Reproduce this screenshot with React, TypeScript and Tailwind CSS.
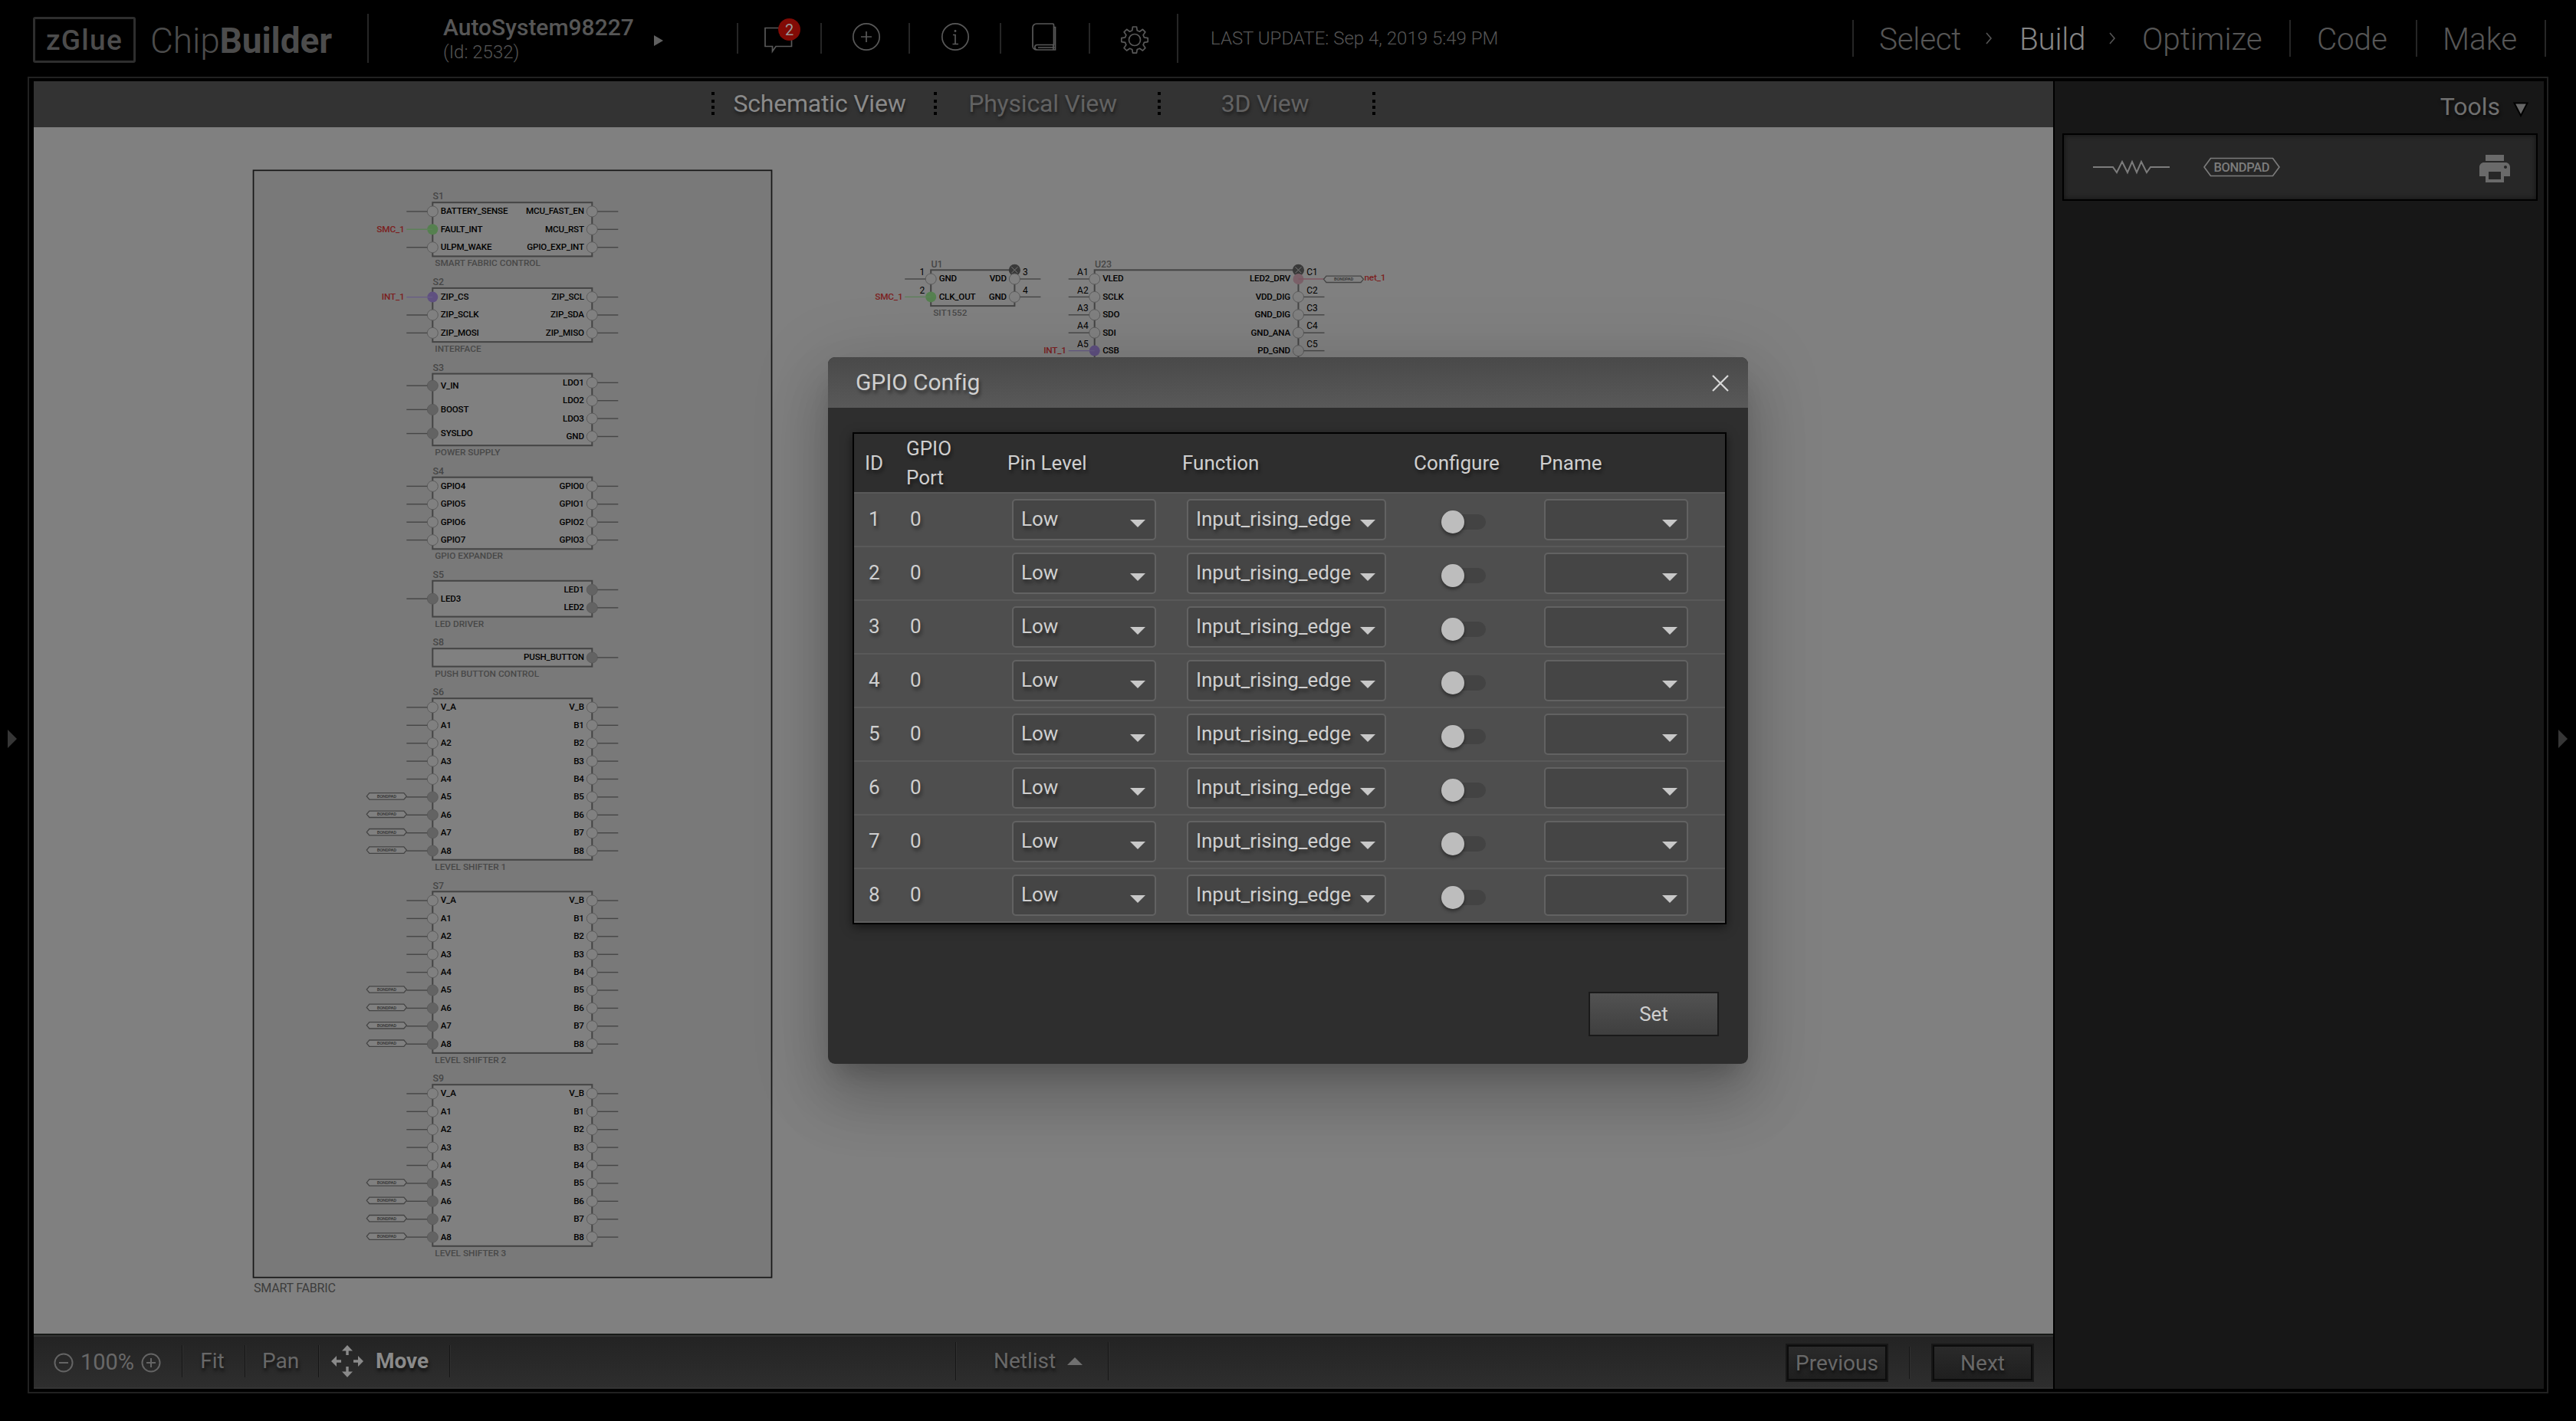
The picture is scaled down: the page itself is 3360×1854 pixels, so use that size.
import React from "react";
import { MdPrint } from "react-icons/md";

const PITCH = 23.4;

/* ---------- Schematic ---------- */

type PinSpec = { name: string; tone?: "open" | "used" | "green" | "purple" | "pink"; net?: string; pad?: boolean };

const toneFill = { open: "#808080", used: "#636363", green: "#55804f", purple: "#5f5080", pink: "#7a6068" };
const toneWire = { open: "#464646", used: "#464646", green: "#5c8058", purple: "#675c86", pink: "#7c5560" };

function Bondpad({ x, y }: { x: number; y: number }) {
  return (
    <g>
      <path
        d={`M${x + 3} ${y - 4.2}H${x + 48}L${x + 51.5} ${y}L${x + 48} ${y + 4.2}H${x + 3}L${x - 0.5} ${y}Z`}
        fill="#808080"
        stroke="#444"
        strokeWidth="1.3"
      />
      <text x={x + 25.5} y={y + 2.1} fontSize="5.8" fontWeight="700" fill="#3c3c3c" textAnchor="middle" letterSpacing="-0.2">
        BONDPAD
      </text>
    </g>
  );
}

function Pin({ x, y, side, pin, no }: { x: number; y: number; side: "l" | "r"; pin: PinSpec; no?: string }) {
  const tone = pin.tone ?? "open";
  const d = side === "l" ? -1 : 1;
  const colored = tone !== "open" && tone !== "used";
  const anchorIn = side === "l" ? "start" : "end";
  const anchorOut = side === "l" ? "end" : "start";
  return (
    <g>
      <circle cx={x} cy={y} r="7" fill={toneFill[tone]} stroke={colored ? "none" : "#5c5c5c"} strokeWidth="1" />
      <line x1={colored ? x : x + d * 7} x2={x + d * 34} y1={y} y2={y} stroke={toneWire[tone]} strokeWidth="1.4" />
      <text
        x={x - d * 10.5}
        y={y + 3.4}
        textAnchor={anchorIn}
        fontSize="11.6"
        fontWeight="500"
        letterSpacing="-0.17"
        fill="#000"
      >
        {pin.name}
      </text>
      {no && (
        <text x={x + d * 8 + (d > 0 ? 2.7 : 0)} y={y - 4.8} textAnchor={anchorOut} fontSize="12" fill="#000">
          {no}
        </text>
      )}
      {pin.pad && <Bondpad x={side === "l" ? x - 85.5 : x + 33.5} y={side === "l" ? y - 1 : y + 0.3} />}
      {pin.net && (
        <text
          x={x + d * (pin.pad ? 86 : 36.8)}
          y={y + (pin.pad ? 2.4 : 3.2)}
          textAnchor={anchorOut}
          fontSize="11.8"
          fontWeight="500"
          letterSpacing="-0.2"
          fill="#7c2020"
        >
          {pin.net}
        </text>
      )}
    </g>
  );
}

type BlockSpec = {
  id: string;
  x: number;
  y: number;
  w: number;
  rows: number;
  label?: string;
  left: PinSpec[];
  right: PinSpec[];
  leftNo?: string[];
  rightNo?: string[];
  closable?: boolean;
};

function Block({ b }: { b: BlockSpec }) {
  const h = b.rows * PITCH;
  return (
    <g>
      <rect x={b.x} y={b.y} width={b.w} height={h} fill="#808080" stroke="#444" strokeWidth="2" />
      <text x={b.x + 0.2} y={b.y - 3.8} fontSize="12.4" fontWeight="500" fill="#464646">
        {b.id}
      </text>
      {b.label && (
        <text x={b.x + 3} y={b.y + h + 12.9} fontSize="11.8" fontWeight="500" fill="#484848">
          {b.label}
        </text>
      )}
      {b.closable && (
        <g>
          <circle cx={b.x + b.w} cy={b.y} r="7.6" fill="#393939" />
          <path d={`M${b.x + b.w - 4} ${b.y - 4}l8 8m0-8l-8 8`} stroke="#777" strokeWidth="1" />
        </g>
      )}
      {b.left.map((p, i) => (
        <Pin key={i} x={b.x} y={b.y + ((i + 0.5) * h) / b.left.length} side="l" pin={p} no={b.leftNo?.[i]} />
      ))}
      {b.right.map((p, i) => (
        <Pin key={i} x={b.x + b.w} y={b.y + ((i + 0.5) * h) / b.right.length} side="r" pin={p} no={b.rightNo?.[i]} />
      ))}
    </g>
  );
}

const open = (...names: string[]): PinSpec[] => names.map((name) => ({ name }));
const used = (...names: string[]): PinSpec[] => names.map((name) => ({ name, tone: "used" as const }));

const shifter = (id: string, y: number, label: string): BlockSpec => ({
  id,
  x: 564.3,
  y,
  w: 208,
  rows: 9,
  label,
  left: [
    ...open("V_A", "A1", "A2", "A3", "A4"),
    ...["A5", "A6", "A7", "A8"].map((name) => ({ name, tone: "used" as const, pad: true })),
  ],
  right: open("V_B", "B1", "B2", "B3", "B4", "B5", "B6", "B7", "B8"),
});

const blocks: BlockSpec[] = [
  {
    id: "S1", x: 564.3, y: 264.2, w: 208, rows: 3, label: "SMART FABRIC CONTROL",
    left: [{ name: "BATTERY_SENSE" }, { name: "FAULT_INT", tone: "green", net: "SMC_1" }, { name: "ULPM_WAKE" }],
    right: open("MCU_FAST_EN", "MCU_RST", "GPIO_EXP_INT"),
  },
  {
    id: "S2", x: 564.3, y: 375.9, w: 208, rows: 3, label: "INTERFACE",
    left: [{ name: "ZIP_CS", tone: "purple", net: "INT_1" }, { name: "ZIP_SCLK" }, { name: "ZIP_MOSI" }],
    right: open("ZIP_SCL", "ZIP_SDA", "ZIP_MISO"),
  },
  { id: "S3", x: 564.3, y: 487.6, w: 208, rows: 4, label: "POWER SUPPLY", left: used("V_IN", "BOOST", "SYSLDO"), right: open("LDO1", "LDO2", "LDO3", "GND") },
  { id: "S4", x: 564.3, y: 622.7, w: 208, rows: 4, label: "GPIO EXPANDER", left: open("GPIO4", "GPIO5", "GPIO6", "GPIO7"), right: open("GPIO0", "GPIO1", "GPIO2", "GPIO3") },
  { id: "S5", x: 564.3, y: 757.8, w: 208, rows: 2, label: "LED DRIVER", left: used("LED3"), right: used("LED1", "LED2") },
  { id: "S8", x: 564.3, y: 846.2, w: 208, rows: 1, label: "PUSH BUTTON CONTROL", left: [], right: used("PUSH_BUTTON") },
  shifter("S6", 911.2, "LEVEL SHIFTER 1"),
  shifter("S7", 1163.3, "LEVEL SHIFTER 2"),
  shifter("S9", 1415.2, "LEVEL SHIFTER 3"),
  {
    id: "U1", x: 1214.2, y: 352.3, w: 109.2, rows: 2, label: "SIT1552", closable: true,
    left: [{ name: "GND" }, { name: "CLK_OUT", tone: "green", net: "SMC_1" }],
    right: open("VDD", "GND"),
    leftNo: ["1", "2"],
    rightNo: ["3", "4"],
  },
  {
    id: "U23", x: 1427.7, y: 352.3, w: 265.8, rows: 6, closable: true,
    left: [...open("VLED", "SCLK", "SDO", "SDI"), { name: "CSB", tone: "purple", net: "INT_1" }, { name: "INT1" }],
    right: [{ name: "LED2_DRV", tone: "pink", net: "net_1", pad: true }, ...open("VDD_DIG", "GND_DIG", "GND_ANA", "PD_GND", "PD1")],
    leftNo: ["A1", "A2", "A3", "A4", "A5", "A6"],
    rightNo: ["C1", "C2", "C3", "C4", "C5", "C6"],
  },
];

function Schematic() {
  return (
    <svg className="block" width="2634" height="1574" viewBox="44 166 2634 1574" fontFamily="Roboto, sans-serif">
      <rect x="330.5" y="222.3" width="676" height="1444.400" fill="#797979" stroke="#161616" strokeWidth="1.7" />
      <text x="331" y="1686.3" fontSize="16" letterSpacing="-0.2" fill="#3c3c3c">
        SMART FABRIC
      </text>
      {blocks.map((b) => (
        <Block key={b.id} b={b} />
      ))}
    </svg>
  );
}

/* ---------- Header ---------- */

const Rule = ({ className }: { className: string }) => <div className={`w-[2px] shrink-0 bg-[#262626] ${className}`} />;

function Header() {
  return (
    <header className="flex h-[100px] shrink-0 items-center text-[#565656]">
      <div className="ml-[43px] mt-1 flex h-[60px] w-[134px] shrink-0 items-center justify-center rounded-[3px] border-[3px] border-[#2e2e2e]">
        <span className="text-[37px] font-medium leading-none tracking-[1.3px] text-[#4c4c4c]">zGlue</span>
      </div>
      <div className="ml-[19px] mt-1.5 w-[240px] shrink-0 whitespace-nowrap text-[46px] leading-none tracking-[-0.1px] text-[#4c4c4c]">
        <span className="font-light">Chip</span>
        <span className="font-bold">Builder</span>
      </div>
      <Rule className="ml-[43px] h-16" />
      <div className="ml-[97px] w-[260px] shrink-0 pt-[3px] leading-8">
        <div className="whitespace-nowrap text-[30px] font-medium">AutoSystem98227</div>
        <div className="whitespace-nowrap text-[24px] font-light">(Id: 2532)</div>
      </div>
      <svg className="ml-[15px] mt-1.5 shrink-0" width="13" height="16" viewBox="0 0 13 16">
        <path d="M0 1L12 8L0 15Z" fill="#606060" />
      </svg>
      <Rule className="ml-[95px] h-10" />
      <div className="relative ml-[29px] h-11 w-11 shrink-0">
        <svg width="44" height="44" viewBox="0 0 44 44" fill="none" stroke="#585858" strokeWidth="1.7">
          <path d="M6 8.5H40.500V32.5H20L15.500 39V32.5H6Z" />
        </svg>
        <span className="absolute left-[23px] top-[-4px] flex h-[29px] w-[29px] items-center justify-center rounded-full bg-[#820a05] text-[20px] text-[#999]">
          2
        </span>
      </div>
      <Rule className="ml-[34px] h-10" />
      <svg className="ml-[36px] shrink-0" width="44" height="44" viewBox="0 0 44 44" fill="none" stroke="#585858" strokeWidth="1.7">
        <circle cx="22" cy="20" r="17.200" />
        <path d="M22 13v14M15 20h14" />
      </svg>
      <Rule className="ml-[33px] h-10" />
      <svg className="ml-[37px] shrink-0" width="44" height="44" viewBox="0 0 44 44" fill="none" stroke="#585858" strokeWidth="1.7">
        <circle cx="22" cy="20" r="17.200" />
        <circle cx="22" cy="12.500" r="1.400" fill="#585858" stroke="none" />
        <path d="M19 17.500h3v12M18.500 29.500h7.500" />
      </svg>
      <Rule className="ml-[36px] h-10" />
      <svg className="ml-[33px] shrink-0" width="44" height="44" viewBox="0 0 44 44" fill="none" stroke="#585858" strokeWidth="1.7">
        <path d="M36 7.500h1.500V37H13a5 5 0 0 1-5-4.500V8a5 5 0 0 1 5-5h21q1.500 0 1.500 1.500V30.500H14a3 3 0 0 0 0 6.500M15 34h21.500M35 30.500V37" />
      </svg>
      <Rule className="ml-[37px] h-10" />
      <svg className="ml-[36px] shrink-0" width="44" height="44" viewBox="0 0 44 44" fill="none" stroke="#585858" strokeWidth="1.7" strokeLinejoin="round">
        <circle cx="22" cy="24" r="7.500" />
        <path d="M19.500 7h5l.8 4.800 3.200 1.400 4-2.900 3.400 3.500-2.800 3.900 1.300 3.100 4.800.8v5l-4.800.8-1.300 3.200 2.800 4-3.400 3.400-4-2.800-3.200 1.300-.8 4.700h-5l-.8-4.700-3.100-1.300-4 2.800-3.500-3.400 2.800-4-1.300-3.200-4.800-.8v-5l4.800-.8 1.300-3.100-2.800-3.900 3.500-3.500 4 2.900 3.100-1.400z" />
      </svg>
      <Rule className="ml-[33px] h-16" />
      <div className="ml-[42px] w-[400px] shrink-0 whitespace-nowrap text-[24px] font-light">
        LAST UPDATE: Sep 4, 2019 5:49 PM
      </div>
      <nav className="ml-auto mr-[39px] flex shrink-0 items-center whitespace-nowrap text-[40.500px] font-light">
        <Rule className="h-12" />
        <span className="ml-[33px] w-[139px] pt-0.5 tracking-[-0.3px]">Select</span>
        <Chevron />
        <span className="ml-[35px] w-[117px] pt-0.5 text-[#858585] tracking-[-0.3px]">Build</span>
        <Chevron />
        <span className="ml-[34px] w-[192px] pt-0.5 tracking-[-0.1px]">Optimize</span>
        <Rule className="h-12" />
        <span className="ml-[34px] w-[129px] pt-0.5 tracking-[-0.2px]">Code</span>
        <Rule className="h-12" />
        <span className="ml-[33px] w-[133px] pt-0.5">Make</span>
        <Rule className="h-12" />
      </nav>
    </header>
  );
}

const Chevron = () => (
  <svg width="9" height="16" viewBox="0 0 9 16" fill="none" stroke="#555" strokeWidth="1.6">
    <path d="M1 1l6 7l-6 7" />
  </svg>
);

/* ---------- Workspace ---------- */

const Dots = () => (
  <div className="flex w-1 shrink-0 flex-col">
    <i className="mb-1.5 h-1 bg-black" />
    <i className="mb-1 h-1 bg-black" />
    <i className="mb-1 h-1 bg-black" />
    <i className="h-1 bg-black" />
  </div>
);

function ViewTabs() {
  return (
    <div className="flex h-[60px] shrink-0 items-center whitespace-nowrap bg-[#333] pb-[2px] text-[32px] tracking-[-0.2px] text-[#626262] [text-shadow:1px_3px_4px_rgba(0,0,0,0.5)]">
      <div className="w-[884px]" />
      <Dots />
      <span className="w-[286px] pr-3 text-center text-[#8a8a8a]">Schematic View</span>
      <Dots />
      <span className="w-[288px] pr-3 text-center">Physical View</span>
      <Dots />
      <span className="w-[276px] pr-1 text-center">3D View</span>
      <Dots />
    </div>
  );
}

const FootRule = ({ className }: { className: string }) => (
  <div className={`w-[2px] shrink-0 border-l border-[#161616] bg-[#303030] ${className}`} />
);

function ZoomIcon({ plus }: { plus?: boolean }) {
  return (
    <svg className="shrink-0" width="26" height="26" viewBox="0 0 26 26" fill="none" stroke="#646464" strokeWidth="2">
      <circle cx="13" cy="13" r="11.500" />
      <path d={plus ? "M7 13h12M13 7v12" : "M7 13h12"} />
    </svg>
  );
}

function Footer() {
  const button =
    "flex h-[50px] w-[134px] shrink-0 items-center justify-center border-2 border-[#171717] bg-[#0c0c0c] p-0.5";
  const face = "flex h-full w-full items-center justify-center bg-linear-to-b from-[#2a2a2a] to-[#1f1f1f] pt-[2px]";
  return (
    <div className="flex h-[72px] shrink-0 items-center whitespace-nowrap border-y-2 border-t-[#171a17] border-b-[#343434] bg-linear-to-b from-[#232323] to-[#2e2e2e] text-[28px] text-[#686868] shadow-[inset_0_2px_0_#333] [text-shadow:1px_4px_4px_rgba(0,0,0,0.6)]">
      <div className="ml-[26px] flex w-[167px] shrink-0 items-center pt-1">
        <ZoomIcon />
        <span className="w-[88px] text-center text-[29px] [text-shadow:none]">100%</span>
        <ZoomIcon plus />
      </div>
      <FootRule className="h-[42px]" />
      <span className="w-[80px] pr-1 text-center">Fit</span>
      <FootRule className="h-[42px]" />
      <span className="w-[94px] pr-1 text-center">Pan</span>
      <FootRule className="h-[42px]" />
      <svg className="ml-[15px] shrink-0" width="42" height="42" viewBox="0 0 42 42" fill="#8a8a8a">
        <path d="M21 0l7 7.500h-5.300V13h-3.400V7.500H14zM21 42l-7-7.500h5.300V28h3.400v6.500H28zM0 21l7-7v5.300h6v3.400H7V28zM42 21l-7 7v-5.300h-6v-3.400h6V14z" />
      </svg>
      <span className="ml-4 w-[96px] font-bold text-[#8a8a8a]">Move</span>
      <FootRule className="h-[42px]" />
      <div className="w-[658px] shrink-0" />
      <FootRule className="h-[50px]" />
      <div className="flex w-[197px] shrink-0 items-center pl-[48px]">
        <span className="w-[96px]">Netlist</span>
        <svg width="20" height="10" viewBox="0 0 20 10">
          <path d="M0 10L10 0L20 10Z" fill="#707070" />
        </svg>
      </div>
      <FootRule className="h-[50px]" />
      <div className="ml-auto mr-[25px] flex items-center pt-1">
        <div className={button}>
          <div className={face}>Previous</div>
        </div>
        <FootRule className="mx-[27px] h-[42px]" />
        <div className={button}>
          <div className={face}>Next</div>
        </div>
      </div>
    </div>
  );
}

function ToolsPanel() {
  return (
    <aside className="ml-[2px] flex grow flex-col bg-[#171717]">
      <div className="flex h-[68px] items-center justify-end pr-[20px] pb-[2px] text-[32px] text-[#707070] [text-shadow:1px_3px_4px_rgba(0,0,0,0.6)]">
        <span className="mr-[17px]">Tools</span>
        <svg className="mt-2" width="20" height="20" viewBox="0 0 20 20">
          <path d="M1.500 1.500H18.500L10 18Z" fill="#666" stroke="#000" strokeWidth="2" />
        </svg>
      </div>
      <div className="ml-2.5 flex h-[88px] w-[620px] items-center border-2 border-black bg-[#272727] shadow-[inset_0_0_6px_#111]">
        <svg className="ml-[38px]" width="100" height="20" viewBox="0 0 100 20" fill="none" stroke="#7c7c7c" strokeWidth="2">
          <path d="M0 10H26L31 17L38 3L45 17L51 3L57 17L63 3L70 17L75 10H100" />
        </svg>
        <svg className="ml-[44px]" width="100" height="26" viewBox="0 0 100 26">
          <path d="M9.500 1.500H90.500L99 13L90.500 24.500H9.500L1 13Z" fill="none" stroke="#7c7c7c" strokeWidth="1.700" />
          <text x="50" y="19" fontFamily="Roboto, sans-serif" fontSize="16.500" fontWeight="500" fill="#7c7c7c" textAnchor="middle" textLength="73">
            BONDPAD
          </text>
        </svg>
        <MdPrint className="ml-auto mr-[30px] mt-1" size={48} color="#6a6a6a" />
      </div>
    </aside>
  );
}

/* ---------- Dialog ---------- */

const columns = "grid grid-cols-[54px_132px_228px_301px_165px_1fr]";

function Select({ value, className }: { value: string; className: string }) {
  return (
    <div className={`flex h-[54px] items-center justify-between rounded-[5px] border-2 border-[#626262] bg-[#454545] pl-[10px] ${className}`}>
      <span className="pb-[2px] tracking-[-0.05px]">{value}</span>
      <svg className="mt-2.5 shrink-0" width="20" height="10" viewBox="0 0 20 10">
        <path d="M0 0H20L10 10Z" fill="#c8c8c8" />
      </svg>
    </div>
  );
}

function GpioDialog() {
  return (
    <section className="flex h-[922px] w-[1200px] flex-col overflow-hidden rounded-[9px] bg-[#2e2e2e] text-[26px] text-[#cfcfcf] shadow-[0_22px_30px_-14px_rgba(0,0,0,0.2),0_48px_76px_6px_rgba(0,0,0,0.14),0_18px_92px_16px_rgba(0,0,0,0.12)] [text-shadow:2px_4px_4px_rgba(0,0,0,0.45)]">
      <div className="flex h-[66px] shrink-0 items-center justify-between bg-linear-to-b from-[#494949] to-[#595959] pb-1 pl-9 pr-6">
        <h2 className="pt-[3px] text-[30px] tracking-[-0.1px]">GPIO Config</h2>
        <svg className="mt-1.5" width="24" height="24" viewBox="0 0 24 24" stroke="#d8d8d8" strokeWidth="2.200">
          <path d="M2 2L22 22M22 2L2 22" />
        </svg>
      </div>
      <div className="ml-8 mt-8 w-[1140px] border-2 border-black bg-[#4e4e4e] shadow-[0_4px_12px_rgba(0,0,0,0.5)]">
        <div className={`${columns} h-[76px] items-center bg-[#2e2e2e] pb-[2px] leading-[38px]`}>
          <span className="pl-[14px]">ID</span>
          <span className="pl-[14px]">
            GPIO
            <br />
            Port
          </span>
          <span className="pl-[14px]">Pin Level</span>
          <span className="pl-[14px]">Function</span>
          <span className="pl-[15px]">Configure</span>
          <span className="pl-[14px]">Pname</span>
        </div>
        {[1, 2, 3, 4, 5, 6, 7, 8].map((id) => (
          <div key={id} className={`${columns} h-[70px] items-center border-t-2 border-[#595959]`}>
            <span className="pb-[2px] pl-[19px]">{id}</span>
            <span className="pb-[2px] pl-[19px]">0</span>
            <Select value="Low" className="ml-5 w-[188px] pr-3" />
            <Select value="Input_rising_edge" className="ml-5 w-[260px] pr-3" />
            <div className="flex items-center pl-[51px] pt-[6px]">
              <div className="flex h-5 w-[58px] items-center rounded-full bg-[#434343]">
                <div className="h-[30px] w-[30px] shrink-0 rounded-full bg-[#bdbdbd] shadow-[0_3px_4px_rgba(0,0,0,0.4)]" />
              </div>
            </div>
            <Select value="" className="ml-5 w-[188px] pr-3" />
          </div>
        ))}
        <div className="h-[2px] bg-[#5e5e5e]" />
      </div>
      <button className="ml-auto mr-[38px] mt-[88px] h-[58px] w-[170px] border-2 border-[#1a1a1a] bg-linear-to-b from-[#525252] to-[#3f3f3f]">
        Set
      </button>
    </section>
  );
}

const EdgeArrow = ({ className }: { className: string }) => (
  <div className={`flex shrink-0 items-center pt-[9px] ${className}`}>
    <svg width="12" height="24" viewBox="0 0 12 24">
      <path d="M0 0L12 12L0 24Z" fill="#363636" />
    </svg>
  </div>
);

export default function App() {
  return (
    <div className="relative flex h-[1854px] w-[3360px] flex-col overflow-hidden bg-black font-['Roboto',sans-serif]">
      <Header />
      <div className="flex h-[1718px]">
        <EdgeArrow className="w-9 pl-[10px]" />
        <main className="flex h-[1718px] w-[3288px] border-2 border-[#212121] py-1 pl-1.5 pr-1">
          <div className="flex h-[1706px] w-[2634px] shrink-0 flex-col">
            <ViewTabs />
            <div className="h-[1574px] shrink-0 overflow-hidden bg-[#808080]">
              <Schematic />
            </div>
            <Footer />
          </div>
          <ToolsPanel />
        </main>
        <EdgeArrow className="w-9 pl-[13px]" />
      </div>
      <div className="absolute left-[1080px] top-[466px]">
        <GpioDialog />
      </div>
    </div>
  );
}
